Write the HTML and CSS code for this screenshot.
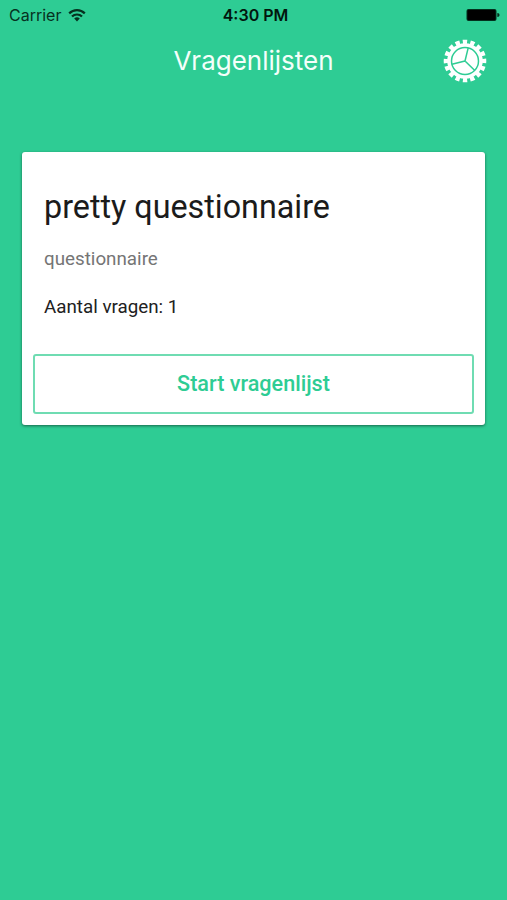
FILE: index.html
```html
<!DOCTYPE html>
<html lang="nl">
<head>
    <meta charset="UTF-8">
    <meta name="viewport" content="width=device-width, initial-scale=1.0">
    <title>Vragenlijsten</title>
    <link rel="stylesheet" href="styles.css">
</head>
<body>
    <!-- status bar -->
    <div class="status-bar">
        <div class="carrier">
            <span class="carrier-name">Carrier</span>
            <svg class="wifi" width="18" height="13" viewBox="0 0 18 13" fill="none" stroke="#06311f" stroke-width="2.2">
                <path d="M1.2 4.4A11 11 0 0 1 16.8 4.4"/>
                <path d="M4 7.6A7 7 0 0 1 14 7.6"/>
                <path d="M9 12.4L6.2 9.6A4 4 0 0 1 11.8 9.6Z" fill="#06311f" stroke="none"/>
            </svg>
        </div>
        <span class="time">4:30 PM</span>
        <svg class="battery" width="34" height="14" viewBox="0 0 34 14">
            <rect x="0.5" y="1" width="30" height="12" rx="2" fill="#032f1d"/>
            <rect x="1.5" y="2" width="28" height="10" rx="1" fill="#000"/>
            <path d="M31.3 5Q33.6 5.2 33.6 7Q33.6 8.8 31.3 9Z" fill="#032f1d"/>
        </svg>
    </div>

    <!-- header -->
    <header class="header">
        <h1 class="title">Vragenlijsten</h1>
        <button class="settings-btn" aria-label="Instellingen">
            <svg width="44" height="44" viewBox="-22 -22 44 44" fill="none">
                <circle r="18.9" pathLength="320" stroke="#fff" stroke-width="4.8" stroke-dasharray="11.6 8.4" transform="rotate(-6.5)"/>
                <circle r="17.8" fill="#fff"/>
                <circle r="13.5" stroke="#2ecc94" stroke-width="1.5"/>
                <path d="M0 0L3.2 -13.1M0 0L-13.1 3.2M0 0L9.8 9.5" stroke="#2ecc94" stroke-width="1.5"/>
            </svg>
        </button>
    </header>

    <!-- questionnaire -->
    <div class="card">
        <div class="card-content">
            <h2 class="card-title">pretty questionnaire</h2>
            <p class="card-description">questionnaire</p>
            <p class="card-count">Aantal vragen: 1</p>
        </div>
        <button class="start-btn">Start vragenlijst</button>
    </div>
</body>
</html>
```
FILE: styles.css
```css
* {
    box-sizing: border-box;
}
body {
    font-family: Roboto, sans-serif;
    background-color: #2ecc94;
    margin: 0;
    min-height: 100vh;
}
.status-bar {
    display: grid;
    grid-template-columns: 1fr auto 1fr;
    align-items: center;
    height: 30px;
    padding: 0 7px 0 9px;
    font-family: Inter, sans-serif;
    font-size: 16px;
    color: #06311f;
}
.carrier {
    display: flex;
    align-items: center;
    gap: 7px;
}
.time {
    padding-left: 2px;
    font-weight: 600;
    color: #02160d;
}
.battery {
    justify-self: end;
}
.header {
    display: grid;
    grid-template-columns: 1fr auto 1fr;
    align-items: center;
    height: 62px;
    padding: 0 20px;
}
.title {
    grid-column: 2;
    margin: 0;
    font-family: Inter, sans-serif;
    font-size: 26px;
    font-weight: 440;
    line-height: 32px;
    color: #f4fffa;
}
.settings-btn {
    justify-self: end;
    display: flex;
    padding: 0;
    border: none;
    background: none;
    cursor: pointer;
}
.card {
    margin: 60px 22px 0;
    height: 273px;
    padding: 33px 11px 11px;
    background-color: #fff;
    border-radius: 3px;
    box-shadow: 0 1px 3px rgba(0, 0, 0, 0.5);
}
.card-content {
    height: 169px;
    padding: 0 11px;
}
.card-title {
    margin: 0;
    font-size: 32.3px;
    font-weight: 400;
    line-height: 44px;
    color: #1b1b1b;
}
.card-description {
    margin: 18px 0 0;
    font-size: 18.8px;
    line-height: 24px;
    color: #757575;
}
.card-count {
    margin: 24px 0 0;
    font-size: 18.8px;
    line-height: 24px;
    color: #212121;
}
.start-btn {
    display: block;
    width: 100%;
    height: 60px;
    padding: 0 0 2px;
    border: 2px solid #6fdcb2;
    border-radius: 3px;
    background: none;
    font-family: Roboto, sans-serif;
    font-size: 21.6px;
    font-weight: 500;
    color: #2ecc94;
    cursor: pointer;
}
```
